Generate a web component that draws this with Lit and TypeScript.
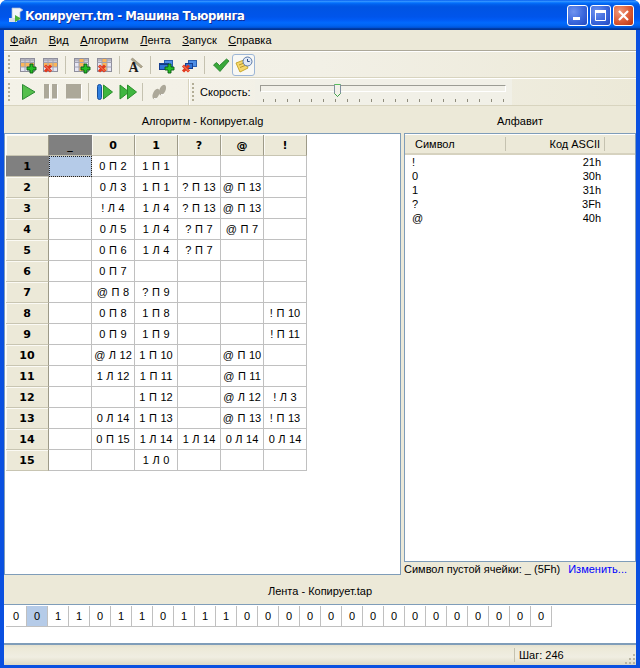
import { LitElement, html, css, svg } from "lit";
import { customElement } from "lit/decorators.js";

const plus = svg`<path d="M11 8h3v3h3v3h-3v3h-3v-3H8v-3h3z" fill="#25bf25" stroke="#0a5a10" stroke-width=".9"/>`;
const cross = svg`<path d="M3 9.500l6 6M9 9.500l-6 6" stroke="#e2391d" stroke-width="3" fill="none"/><path d="M3.500 10l5 5" stroke="#f58a70" fill="none"/>`;
const badge = (k: string) => (k === "add" ? plus : cross);

const tableIcon = (mode: string, k: string) => svg`<svg width="18" height="18" viewBox="0 0 18 18">
    <rect x="1.500" y="2.500" width="14" height="13" fill="#e6e6f4" stroke="#8f8f9c"/>
    <rect x="2" y="3" width="13" height="2.500" fill="#b4b4c0"/>
    ${mode === "row"
      ? svg`<rect x="2" y="7" width="13" height="4" fill="#fbb65a"/>`
      : svg`<rect x="6" y="3" width="5" height="12" fill="#fbb65a"/>`}
    <path d="M1.500 6.500h14M1.500 11h14M6 2.500v13M11 2.500v13" stroke="#a2a2b0" fill="none"/>
    ${badge(k)}</svg>`;

const winIcon = (k: string) =>
  k === "add"
    ? svg`<svg width="18" height="18" viewBox="0 0 18 18">
  <rect x="7.500" y="4.500" width="8" height="6" fill="#4f8fe6" stroke="#2a5fb0"/>
  <rect x="2.500" y="7.500" width="9" height="6" fill="#2f74d6" stroke="#163f90"/>
  <path d="M3 8.500h8" stroke="#123a80"/>${plus}</svg>`
    : svg`<svg width="18" height="18" viewBox="0 0 18 18">
  <rect x="8.500" y="4.500" width="8" height="6" fill="#4f8fe6" stroke="#2a5fb0"/>
  <rect x="5.500" y="7.500" width="7" height="5" fill="#2f74d6" stroke="#163f90"/>${cross}</svg>`;

const fontIcon = svg`<svg width="18" height="18" viewBox="0 0 18 18">
  <path d="M6.500 2l10 8.500-1.500 1.500L5 3.500z" fill="#b3a98f" stroke="#8d8672" stroke-width=".6"/>
  <text x="7.500" y="16" text-anchor="middle" font-family="Liberation Serif" font-weight="700" font-size="14" fill="#1c1c1c">A</text></svg>`;

const checkIcon = svg`<svg width="18" height="18" viewBox="0 0 18 18">
  <path d="M1.500 9l3-2.500 3 3L14.500 3l2.500 2-9 10.500z" fill="#3aa83a" stroke="#1d7a24" stroke-width=".8"/></svg>`;

const notesIcon = svg`<svg width="18" height="18" viewBox="0 0 18 18">
  <path d="M1 7l8-3 4 8-8 4z" fill="#f5d76a" stroke="#c9a92f"/>
  <path d="M4 9l5-2M5 11.500l5-2" stroke="#b9952a" fill="none"/>
  <circle cx="12.500" cy="5.500" r="4.500" fill="#dfe8f6" stroke="#5a78a8"/>
  <path d="M12.500 3v2.500h2.200" stroke="#2b4a80" fill="none"/></svg>`;

const tri = (x: number) => svg`<path d="M${x} 2l9 7-9 7z" fill="#3fb63f" stroke="#2a8f2a"/>`;
const playIcon = svg`<svg width="18" height="18" viewBox="0 0 18 18"><path d="M3.500 1.500L16 9 3.500 16.500z" fill="#55bf4c" stroke="#2e8b35"/></svg>`;
const pauseIcon = svg`<svg width="18" height="18" viewBox="0 0 18 18"><path d="M3 2h5v15H3zM11 2h5v15h-5z" fill="#fff"/><path d="M2 1h5v14.500H2zM10 1h5v14.500h-5z" fill="#aca899"/></svg>`;
const stopIcon = svg`<svg width="18" height="18" viewBox="0 0 18 18"><rect x="2" y="2" width="15" height="15" fill="#fff"/><rect x="1" y="1" width="15" height="14.500" fill="#aca899"/></svg>`;
const stepIcon = svg`<svg width="18" height="18" viewBox="0 0 18 18"><rect x="1.500" y="1.500" width="4" height="15" rx="2" fill="#2f7fe0" stroke="#174f9c"/>${tri(7.5)}</svg>`;
const ffIcon = svg`<svg width="18" height="18" viewBox="0 0 18 18">${tri(1)}${tri(8.5)}</svg>`;
const stepsIcon = svg`<svg width="18" height="18" viewBox="0 0 18 18">
  <ellipse cx="6" cy="11" rx="3" ry="5.500" transform="rotate(25 6 11)" fill="#aca899"/>
  <ellipse cx="12.500" cy="7" rx="3" ry="5.500" transform="rotate(25 12.500 7)" fill="#aca899"/>
  <path d="M4 15.500l3 .5M11 11.500l3 .5" stroke="#fff" fill="none"/></svg>`;

const appIcon = svg`<svg width="18" height="18" viewBox="0 0 18 18">
  <path d="M5 2h8l3 2-3 2v8H5z" fill="#f2f4f8" stroke="#a8b8d0" stroke-width=".7"/>
  <path d="M2 12h8v4H2z" fill="#d6dce8"/>
  <path d="M8 9l6 3.500-6 3.500z" fill="#46b03a"/></svg>`;

const COLS = ["_", "0", "1", "?", "@", "!"];
const ROWS: string[][] = [
  ["", "0 П 2", "1 П 1", "", "", ""],
  ["", "0 Л 3", "1 П 1", "? П 13", "@ П 13", ""],
  ["", "! Л 4", "1 Л 4", "? П 13", "@ П 13", ""],
  ["", "0 Л 5", "1 Л 4", "? П 7", "@ П 7", ""],
  ["", "0 П 6", "1 Л 4", "? П 7", "", ""],
  ["", "0 П 7", "", "", "", ""],
  ["", "@ П 8", "? П 9", "", "", ""],
  ["", "0 П 8", "1 П 8", "", "", "! П 10"],
  ["", "0 П 9", "1 П 9", "", "", "! П 11"],
  ["", "@ Л 12", "1 П 10", "", "@ П 10", ""],
  ["", "1 Л 12", "1 П 11", "", "@ П 11", ""],
  ["", "", "1 П 12", "", "@ Л 12", "! Л 3"],
  ["", "0 Л 14", "1 П 13", "", "@ П 13", "! П 13"],
  ["", "0 П 15", "1 Л 14", "1 Л 14", "0 Л 14", "0 Л 14"],
  ["", "", "1 Л 0", "", "", ""],
];
const ALPHABET = [["!", "21h"], ["0", "30h"], ["1", "31h"], ["?", "3Fh"], ["@", "40h"]];
const TAPE = "00110110111000000000000000".split("");
const MENU = ["Файл", "Вид", "Алгоритм", "Лента", "Запуск", "Справка"];

@customElement("app-root")
export class AppRoot extends LitElement {
  static styles = css`
    :host { display: block; width: 640px; height: 668px; overflow: hidden; background: #fff;
      font-family: "Liberation Sans", Arial, sans-serif; font-size: 11px; color: #000; }
    .window { width: 640px; height: 668px; display: flex; flex-direction: column; border-radius: 7px 7px 0 0; overflow: hidden; background: #0a50e0; }
    .title { flex: 0 0 30px; display: flex; align-items: center; padding: 0 6px 0 7px;
      background: linear-gradient(180deg,#0058ee 0%,#3593ff 4%,#288eff 6%,#127dff 8%,#036ffc 10%,#0262ee 14%,#0057e5 20%,#0054e3 24%,#0055eb 56%,#005bf5 66%,#026afe 76%,#0062ef 86%,#0052d6 92%,#0040ab 94%,#003092 100%); }
    .title-text { flex: 1; color: #fff; font: 700 13px "DejaVu Sans", sans-serif; font-stretch: condensed; letter-spacing: -.42px; text-shadow: 1px 1px 0 #0f2f9a; }
    .wbtns { display: flex; gap: 2px; }
    .wbtn { width: 21px; height: 21px; box-sizing: border-box; border: 1px solid #fff; border-radius: 3px; display: flex; align-items: center; justify-content: center;
      background: radial-gradient(circle at 30% 30%, #6f93ef 0%, #3b67dc 55%, #2449c0 100%); }
    .wbtn.close { background: radial-gradient(circle at 30% 30%, #f09a7c 0%, #dc5a34 55%, #b8300f 100%); }
    .frame { flex: 1; display: flex; flex-direction: column; margin: 0 4px 3px; background: #ece9d8; min-height: 0; }
    .menu { flex: 0 0 20px; display: flex; align-items: center; padding-left: 6px; gap: 11.6px; }
    .menu u { text-underline-offset: 1px; }
    .bands { border-top: 1px solid #aca899; box-shadow: inset 0 1px 0 #fff; }
    .band { display: flex; align-items: center; height: 27px; box-sizing: border-box; border-top: 1px solid #fff; padding-left: 3px;
      background: linear-gradient(90deg, #f4f2e8 0%, #f2f0e6 50%, #ece9d8 100%); border-bottom: 1px solid #d8d4bf; }
    .band + .band { height: 28px; }
    .grip { width: 2px; height: 19px; margin: 0 6px 0 1px; flex: none; background: repeating-linear-gradient(180deg, #b3ae97 0 2px, transparent 2px 4px); }
    .grip.second { margin: 0 0 0 2px; }
    .tb { width: 23px; height: 22px; flex: none; display: flex; align-items: center; justify-content: center; box-sizing: border-box; }
    .tb.on { border: 1px solid #9db6d6; border-radius: 3px; background: #f8f8f4; }
    .sep { width: 1px; height: 18px; background: #c5c2b0; margin: 0 4px 0 3px; flex: none; }
    .sep.s2 { margin: 0 3px; }
    .sep.s3 { margin: 0 3px 0 4px; }
    .sep.s4 { margin: 0 4px; }
    .ends { width: 1px; align-self: stretch; background: #fff; margin-left: 19px; flex: none; box-shadow: -1px 0 0 #d8d4bf; }
    .speed { margin-left: 6px; flex: none; width: 55px; }
    .slider { position: relative; flex: none; width: 257px; height: 26px; background: #f1f0e7; }
    .track { position: absolute; left: 5px; top: 6px; width: 244px; height: 5px; border: 1px solid #fff; border-top-color: #9c9c94; border-left-color: #9c9c94; background: #f1f0e8; }
    .ticks { position: absolute; left: 8px; top: 20px; width: 241px; height: 3px; background: repeating-linear-gradient(90deg, #8f8c7c 0 1px, transparent 1px 12px); }
    .thumb { position: absolute; left: 78px; top: 4px; }
    .panes { height: 469px; display: flex; gap: 2px; flex: none; }
    .pane { display: flex; flex-direction: column; min-width: 0; }
    .left { width: 397px; }
    .right { flex: 1; padding-left: 1px; }
    .phead { flex: 0 0 27px; display: flex; align-items: center; justify-content: center; padding-top: 2px; box-sizing: border-box; }
    .box { border: 1px solid #7f9db9; background: #fff; flex: 1; min-height: 0; overflow: hidden; }
    .grid { display: grid; grid-template-columns: repeat(7, 43px); grid-auto-rows: 21px; padding: 1px 0 0 1px; }
    .c { box-sizing: border-box; border-right: 1px solid #c0c0c0; border-bottom: 1px solid #c0c0c0; display: flex; align-items: center; justify-content: center; word-spacing: .5px; }
    .h { background: #ece9d8; border-right-color: #9d9a88; border-bottom-color: #c8c5b2; font: 700 11px "DejaVu Sans", sans-serif; box-shadow: inset 1px 1px 0 #fbfaf4; }
    .h.sel { background: #808080; box-shadow: none; border-right-color: #808080; }
    .c.cur { background: #b5cbe8; outline: 1px dotted #222; outline-offset: -1px; }
    .lh { display: flex; height: 20px; box-sizing: border-box; margin-top: 1px; background: #ece9d8; border-bottom: 2px solid #d6d2bf; align-items: center; }
    .lh span { box-sizing: border-box; height: 14px; line-height: 14px; border-right: 1px solid #c5c2b0; }
    .lh .a { width: 101px; padding-left: 10px; }
    .lh .b { width: 99px; text-align: right; padding-right: 4px; }
    .lr { display: flex; height: 14px; align-items: center; }
    .lr .a { width: 101px; padding-left: 7px; box-sizing: border-box; }
    .lr .b { width: 95px; text-align: right; }
    .foot { flex: 0 0 13px; display: flex; justify-content: space-between; padding: 1px 9px 0 0; box-sizing: border-box; align-items: center; white-space: nowrap; }
    .link { color: #0000ff; }
    .tape-head { flex: 0 0 29px; display: flex; align-items: center; justify-content: center; box-sizing: border-box; padding-top: 3px; }
    .tape { flex: 0 0 41px; box-sizing: border-box; border-top: 1px solid #7f9db9; border-bottom: 2px solid #7f9db9; background: #fff; padding: 1px 0 0 2px; display: flex; align-items: flex-start; }
    .t { width: 21px; height: 21px; box-sizing: border-box; border-right: 1px solid #c0c0c0; border-bottom: 1px solid #c0c0c0; display: flex; align-items: center; justify-content: center; }
    .t.cur { background: #b5cbe8; }
    .status { flex: 1; display: flex; align-items: center; justify-content: flex-end; background: linear-gradient(180deg, #e4e1cf 0, #ece9d8 3px, #f0eee2 60%, #dcd9c6 100%); position: relative; }
    .step { width: 122px; box-sizing: border-box; border-left: 1px solid #c5c2b0; height: 14px; line-height: 14px; padding-left: 4px; }
    .sg { position: absolute; right: 0; bottom: 0; }
  `;

  private tb(icon: unknown, on = false) {
    return html`<div class="tb ${on ? "on" : ""}">${icon}</div>`;
  }

  render() {
    return html`<div class="window">
      <div class="title">
        ${appIcon}
        <div class="title-text">Копируетт.tm - Машина Тьюринга</div>
        <div class="wbtns">
          <div class="wbtn"><svg width="13" height="13" viewBox="0 0 13 13"><rect x="2" y="8" width="7" height="3" fill="#fff"/></svg></div>
          <div class="wbtn"><svg width="13" height="13" viewBox="0 0 13 13"><path d="M1.500 2.500h10v9h-10z" fill="none" stroke="#fff"/><rect x="1" y="1" width="11" height="3" fill="#fff"/></svg></div>
          <div class="wbtn close"><svg width="13" height="13" viewBox="0 0 13 13"><path d="M2 2l9 9M11 2l-9 9" stroke="#fff" stroke-width="2.200"/></svg></div>
        </div>
      </div>
      <div class="frame">
        <div class="menu">${MENU.map((m) => html`<span><u>${m[0]}</u>${m.slice(1)}</span>`)}</div>
        <div class="bands">
          <div class="band">
            <div class="grip"></div>
            ${this.tb(tableIcon("row", "add"))}${this.tb(tableIcon("row", "del"))}
            <div class="sep"></div>
            ${this.tb(tableIcon("col", "add"))}${this.tb(tableIcon("col", "del"))}
            <div class="sep s2"></div>
            ${this.tb(fontIcon)}
            <div class="sep s3"></div>
            ${this.tb(winIcon("add"))}${this.tb(winIcon("del"))}
            <div class="sep s4"></div>
            ${this.tb(checkIcon)}${this.tb(notesIcon, true)}
          </div>
          <div class="band">
            <div class="grip"></div>
            ${this.tb(playIcon)}${this.tb(pauseIcon)}${this.tb(stopIcon)}
            <div class="sep"></div>
            ${this.tb(stepIcon)}${this.tb(ffIcon)}
            <div class="sep"></div>
            ${this.tb(stepsIcon)}
            <div class="ends"></div>
            <div class="grip second"></div>
            <div class="speed">Скорость:</div>
            <div class="slider">
              <div class="track"></div>
              <div class="ticks"></div>
              <svg class="thumb" width="9" height="15" viewBox="0 0 9 15"><path d="M1.500 1.500h6v9l-3 3-3-3z" fill="#f2f1e8" stroke="#7f8f9f"/><path d="M1.500 1.500h6" stroke="#58c05c"/><path d="M1.500 10.500l3 3 3-3" stroke="#3fa545" fill="none"/></svg>
            </div>
          </div>
        </div>
        <div class="panes">
          <div class="pane left">
            <div class="phead">Алгоритм - Копирует.alg</div>
            <div class="box"><div class="grid">
              <div class="c h"></div>
              ${COLS.map((c) => html`<div class="c h ${c === "_" ? "sel" : ""}">${c}</div>`)}
              ${ROWS.map((r, i) => html`
                <div class="c h ${i === 0 ? "sel" : ""}">${i + 1}</div>
                ${r.map((v, j) => html`<div class="c ${i === 0 && j === 0 ? "cur" : ""}">${v}</div>`)}`)}
            </div></div>
          </div>
          <div class="pane right">
            <div class="phead">Алфавит</div>
            <div class="box">
              <div class="lh"><span class="a">Символ</span><span class="b">Код ASCII</span></div>
              ${ALPHABET.map(([a, b]) => html`<div class="lr"><span class="a">${a}</span><span class="b">${b}</span></div>`)}
            </div>
            <div class="foot"><span>Символ пустой ячейки: _ (5Fh)</span><span class="link">Изменить...</span></div>
          </div>
        </div>
        <div class="tape-head">Лента - Копирует.tap</div>
        <div class="tape">${TAPE.map((v, i) => html`<div class="t ${i === 1 ? "cur" : ""}">${v}</div>`)}</div>
        <div class="status">
          <div class="step">Шаг: 246</div>
          <svg class="sg" width="12" height="12" viewBox="0 0 12 12"><path d="M9 1h2v2H9zM5 5h2v2H5zM9 5h2v2H9zM1 9h2v2H1zM5 9h2v2H5zM9 9h2v2H9z" fill="#b8b5a2"/></svg>
        </div>
      </div>
    </div>`;
  }
}
